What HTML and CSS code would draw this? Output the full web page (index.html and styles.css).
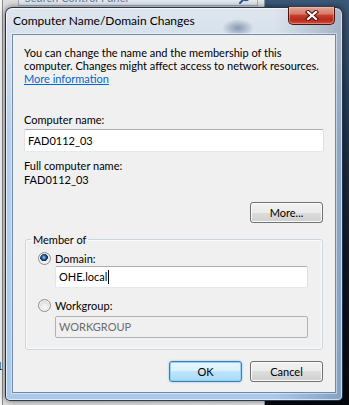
FILE: index.html
```html
<!DOCTYPE html>
<html>
<head>
<meta charset="utf-8">
<title>Computer Name/Domain Changes</title>
<link rel="stylesheet" href="styles.css">
</head>
<body>
<div class="desktop">
  <div class="backwin">
    <div class="searchbox">
      <span class="search-text">Search Control Panel</span>
      <svg class="search-icon" width="12" height="12" viewBox="0 0 12 12"><circle cx="7" cy="4" r="3.5" fill="none" stroke="#2d5a8a" stroke-width="1.6"/><path d="M4.5 6.5 L1 10" stroke="#2d5a8a" stroke-width="2" stroke-linecap="round"/></svg>
    </div>
    <span class="stray">1</span>
  </div>
  <div class="window">
    <div class="titlebar">
      <span class="title">Computer Name/Domain Changes</span>
      <button class="close" type="button" aria-label="Close">
        <svg width="14" height="11" viewBox="0 0 14 11"><path d="M3 2 L11 9 M11 2 L3 9" stroke="#4a120c" stroke-width="4.2" stroke-linecap="square"/><path d="M3 2 L11 9 M11 2 L3 9" stroke="#ffffff" stroke-width="2.2" stroke-linecap="square"/></svg>
      </button>
    </div>
    <div class="client">
      <p class="desc">You can change the name and the membership of this<br>computer. Changes might affect access to network resources.<br><a href="#" class="link">More information</a></p>
      <div class="lbl first-lbl">Computer name:</div>
      <div class="textbox">FAD0112_03</div>
      <div class="lbl full-lbl">Full computer name:</div>
      <div class="full-val">FAD0112_03</div>
      <div class="row-right more-row"><button class="btn" type="button">More...</button></div>
      <fieldset class="group">
        <legend class="legend">Member of</legend>
        <div class="radio-row"><span class="radio checked"></span><span>Domain:</span></div>
        <div class="textbox indent domain-box">OHE.local<span class="caret"></span></div>
        <div class="radio-row wg-row"><span class="radio"></span><span>Workgroup:</span></div>
        <div class="textbox indent disabled wg-box">WORKGROUP</div>
      </fieldset>
      <div class="row-right buttons"><button class="btn default" type="button">OK</button><button class="btn" type="button">Cancel</button></div>
    </div>
  </div>
</div>
</body>
</html>
```

FILE: styles.css
```css
* { box-sizing: border-box; }
html, body { margin: 0; padding: 0; }
body {
  width: 349px;
  height: 405px;
  overflow: hidden;
  font-family: Lato, "Noto Sans", sans-serif;
  font-size: 11px;
  color: #000;
}
.desktop {
  position: relative;
  width: 349px;
  height: 405px;
  overflow: hidden;
  background: linear-gradient(180deg, #3a5878 0%, #1d3049 35%, #0c1422 70%, #05080e 100%);
}
.backwin {
  position: absolute;
  left: 0;
  top: 0;
  width: 265px;
  height: 405px;
  background: linear-gradient(to right, #f4f4f4 0, #f4f4f4 2px, #8e8e8e 2px, #8e8e8e 3px, #dedede 3px, #e6e6e6 100%);
  border-right: 1px solid #8797aa;
}
.searchbox {
  position: absolute;
  left: 18px;
  top: -10px;
  width: 240px;
  height: 16px;
  background: #e2e9f1;
  border: 1px solid #9fb0c4;
  display: flex;
  align-items: center;
  padding-left: 6px;
}
.search-text {
  font-style: italic;
  font-size: 12px;
  color: #6a7c92;
  line-height: 14px;
}
.search-icon { margin-left: auto; margin-right: 6px; margin-top: 2px; }
.stray {
  position: absolute;
  left: -4px;
  top: 358px;
  font-size: 12px;
  color: #111;
}
.window {
  position: absolute;
  left: 5px;
  top: 7px;
  width: 338px;
  height: 394px;
  border: 1px solid rgba(18, 28, 42, 0.85);
  border-radius: 7px 7px 5px 5px;
  padding: 0 6px 7px;
  display: flex;
  flex-direction: column;
  background:
    radial-gradient(ellipse 16px 9px at 232px 20px, rgba(70, 90, 130, 0.55), rgba(70, 90, 130, 0)),
    linear-gradient(to right, rgba(255, 255, 255, 0) 80%, rgba(40, 70, 110, 0.3) 100%),
    linear-gradient(180deg, #dfe6ee 0px, #d6e1ec 28px, #b7d0ea 120px, #a9c9ea 100%);
  box-shadow: 0 0 6px rgba(0, 0, 0, 0.55), inset 0 0 0 1px rgba(255, 255, 255, 0.6);
}
.titlebar {
  height: 26px;
  display: flex;
  align-items: flex-start;
}
.title {
  margin: 5px 0 0 1px;
  font-size: 12px;
  line-height: 15px;
  color: #000;
}
.close {
  margin: -1px 1px 0 auto;
  width: 47px;
  height: 18px;
  padding: 0;
  border: 1px solid #4a1510;
  border-top: none;
  border-radius: 0 0 5px 5px;
  background: linear-gradient(180deg, #e5a494 0%, #d77c68 40%, #c5402c 50%, #b92a1c 75%, #d0503c 100%);
  box-shadow: inset 0 0 0 1px rgba(255, 200, 190, 0.45);
  display: flex;
  align-items: center;
  justify-content: center;
}
.client {
  flex: 1;
  background: #f0f0f0;
  border: 1px solid #6f8aa6;
  box-shadow: 0 0 0 1px rgba(255, 255, 255, 0.45);
  padding: 11px 11px 0;
}
.desc {
  margin: 0;
  line-height: 13px;
}
.link { color: #0066cc; text-decoration: underline; }
.lbl { line-height: 13px; }
.first-lbl { margin-top: 28px; }
.textbox {
  height: 23px;
  margin-top: 3px;
  background: #fff;
  border: 1px solid;
  border-color: #abadb3 #dbdfe6 #e3e9ef #e2e3ea;
  border-radius: 2px;
  padding: 0 3px;
  line-height: 21px;
  display: flex;
  align-items: center;
}
.full-lbl { margin-top: 7px; }
.full-val { margin-top: 1px; line-height: 13px; }
.row-right { display: flex; justify-content: flex-end; gap: 8px; }
.more-row { margin-top: 16px; margin-right: 1px; }
.btn {
  width: 73px;
  height: 21px;
  padding: 0;
  border: 1px solid #707070;
  border-radius: 3px;
  background: linear-gradient(180deg, #f2f2f2 0%, #ebebeb 50%, #dddddd 50%, #cfcfcf 100%);
  box-shadow: inset 0 0 0 1px #fbfbfb;
  font-family: inherit;
  font-size: 11px;
  color: #000;
  line-height: 19px;
}
.btn.default {
  border-color: #3c7fb1;
  background: linear-gradient(180deg, #eaf6fd 0%, #d9f0fc 50%, #bee6fd 50%, #a7d9f5 100%);
  box-shadow: inset 0 0 0 1px #8fd3f6, 0 0 2px rgba(60, 150, 220, 0.6);
}
.group {
  margin: 10px 1px 0;
  padding: 6px 14px 11px 12px;
  border: 1px solid #cdd5dc;
  border-radius: 3px;
  box-shadow: inset 0 0 0 1px #fbfbfb;
  min-width: 0;
}
.legend {
  padding: 0 2px;
  margin-left: -7px;
  line-height: 13px;
}
.radio-row {
  display: flex;
  align-items: center;
  height: 13px;
  line-height: 13px;
  gap: 4px;
}
.radio {
  width: 13px;
  height: 13px;
  flex: none;
  border-radius: 50%;
  border: 1px solid #8b8f94;
  background: radial-gradient(circle at 50% 65%, #fbfbfb 0, #e6e6e6 45%, #c8c8c8 100%);
  box-shadow: inset 0 0 0 1px #f4f4f4;
}
.radio.checked {
  background:
    radial-gradient(circle at 45% 40%, #a9dbfa 0, #3a84c4 1.4px, #163a63 3px, #0c2542 3.6px, rgba(12, 37, 66, 0) 4.1px),
    radial-gradient(circle at 50% 65%, #fbfbfb 0, #e6e6e6 45%, #c8c8c8 100%);
}
.indent { margin-left: 17px; height: 22px; line-height: 20px; }
.domain-box { margin-top: 1px; }
.caret {
  display: inline-block;
  width: 1px;
  height: 14px;
  background: #000;
  margin-left: 1px;
}
.wg-row { margin-top: 11px; }
.wg-box { margin-top: 4px; }
.textbox.disabled {
  background: #f0f0f0;
  border-color: #adb2b5;
  color: #6d6d6d;
}
.buttons { margin-top: 11px; margin-right: 1px; }
```
